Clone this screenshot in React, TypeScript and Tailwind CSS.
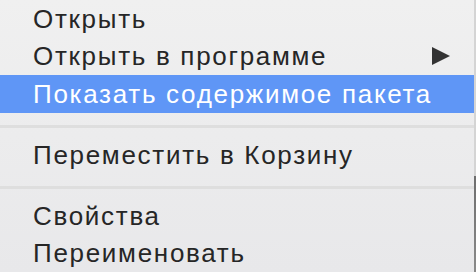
const rows = [
  { label: "Открыть" },
  { label: "Открыть в программе", submenu: true },
  { label: "Показать содержимое пакета", active: true },
];

function Item({ label, submenu, active }: { label: string; submenu?: boolean; active?: boolean }) {
  return (
    <div
      className={`flex h-[37.5px] items-center justify-between pl-[33px] pr-[24px] ${
        active ? "bg-[#5f96f6] text-white" : "text-[#262626]"
      }`}
    >
      <span>{label}</span>
      {submenu && (
        <svg width="18" height="18" viewBox="0 0 18 18" className="fill-[#333]">
          <path d="M0 0 L18 9 L0 18 Z" />
        </svg>
      )}
    </div>
  );
}

function Separator() {
  return <div className="mt-[12px] mb-[8px] h-[3.5px] bg-[#dedede]" />;
}

export default function App() {
  return (
    <div className="flex h-[272px] w-[476px] overflow-hidden">
      <div
        className="w-[474px] bg-gradient-to-b from-[#f0f0f0] to-[#e8e8ea] text-[26px] leading-none tracking-[1.7px]"
        style={{ fontFamily: '"Liberation Sans", Arial, sans-serif' }}
      >
        {rows.map((r) => (
          <Item key={r.label} {...r} />
        ))}
        <Separator />
        <Item label="Переместить в Корзину" />
        <Separator />
        <Item label="Свойства" />
        <Item label="Переименовать" />
      </div>
      <div className="flex w-[2px] flex-col">
        <div className="h-[176px] bg-[#d4d4d4]" />
        <div className="flex-1 bg-gradient-to-b from-[#6e6e6e] to-[#8a8a8a]" />
      </div>
    </div>
  );
}
